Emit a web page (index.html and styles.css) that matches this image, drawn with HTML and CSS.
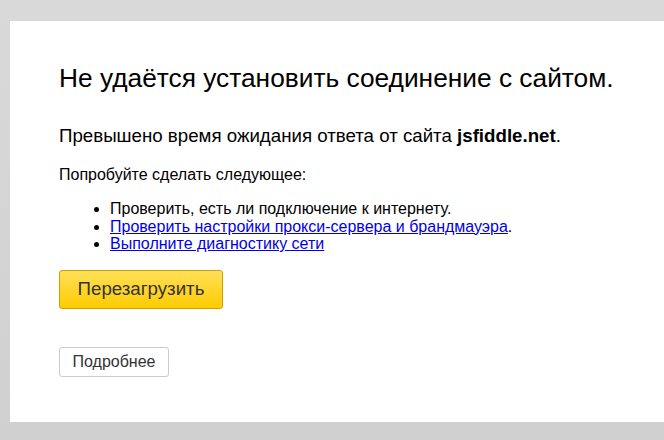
FILE: index.html
```html
<!DOCTYPE html>
<html>
<head>
    <meta charset="utf-8">
    <title>Ошибка</title>
    <link rel="stylesheet" href="styles.css">
</head>
<body>
    <div class="page">
        <h1 class="title">Не удаётся установить соединение с сайтом.</h1>
        <p class="reason">Превышено время ожидания ответа от сайта <b>jsfiddle.net</b>.</p>
        <p class="try">Попробуйте сделать следующее:</p>
        <ul class="tips">
            <li>Проверить, есть ли подключение к интернету.</li>
            <li><a href="#">Проверить настройки прокси-сервера и брандмауэра</a>.</li>
            <li><a href="#">Выполните диагностику сети</a></li>
        </ul>
        <button class="reload">Перезагрузить</button>
        <div>
            <button class="more">Подробнее</button>
        </div>
    </div>
</body>
</html>
```

FILE: styles.css
```css
html, body {
    margin: 0;
    height: 100%;
}
body {
    background: linear-gradient(#d9d9d9, #d0d0d0);
    padding: 21px 0 18px 10px;
    box-sizing: border-box;
    font-family: "Liberation Sans", Arial, sans-serif;
    color: #000;
}
.page {
    background: #fff;
    height: 100%;
    padding: 40px 0 0 49px;
    box-sizing: border-box;
}
.title {
    margin: 0;
    font-size: 26.3px;
    font-weight: normal;
    line-height: 34px;
}
.reason {
    margin: 30px 0 0;
    font-size: 18.7px;
    line-height: 22px;
}
.try {
    margin: 19px 0 0;
    font-size: 16px;
    line-height: 18px;
}
.tips {
    margin: 16px 0 0;
    padding-left: 51px;
    font-size: 16px;
    line-height: 17.5px;
}
.tips a {
    color: #0000ee;
}
.reload {
    margin-top: 17px;
    width: 164px;
    height: 39px;
    border: 1px solid #c9a200;
    border-radius: 3px;
    background: linear-gradient(#ffdf58, #ffcc00);
    font-family: "Liberation Sans", Arial, sans-serif;
    font-size: 18.7px;
    color: #333;
}
.more {
    margin-top: 38px;
    width: 110px;
    height: 30px;
    border: 1px solid #ccc;
    border-radius: 3px;
    background: #fff;
    font-family: "Liberation Sans", Arial, sans-serif;
    font-size: 16px;
    color: #333;
}
```
